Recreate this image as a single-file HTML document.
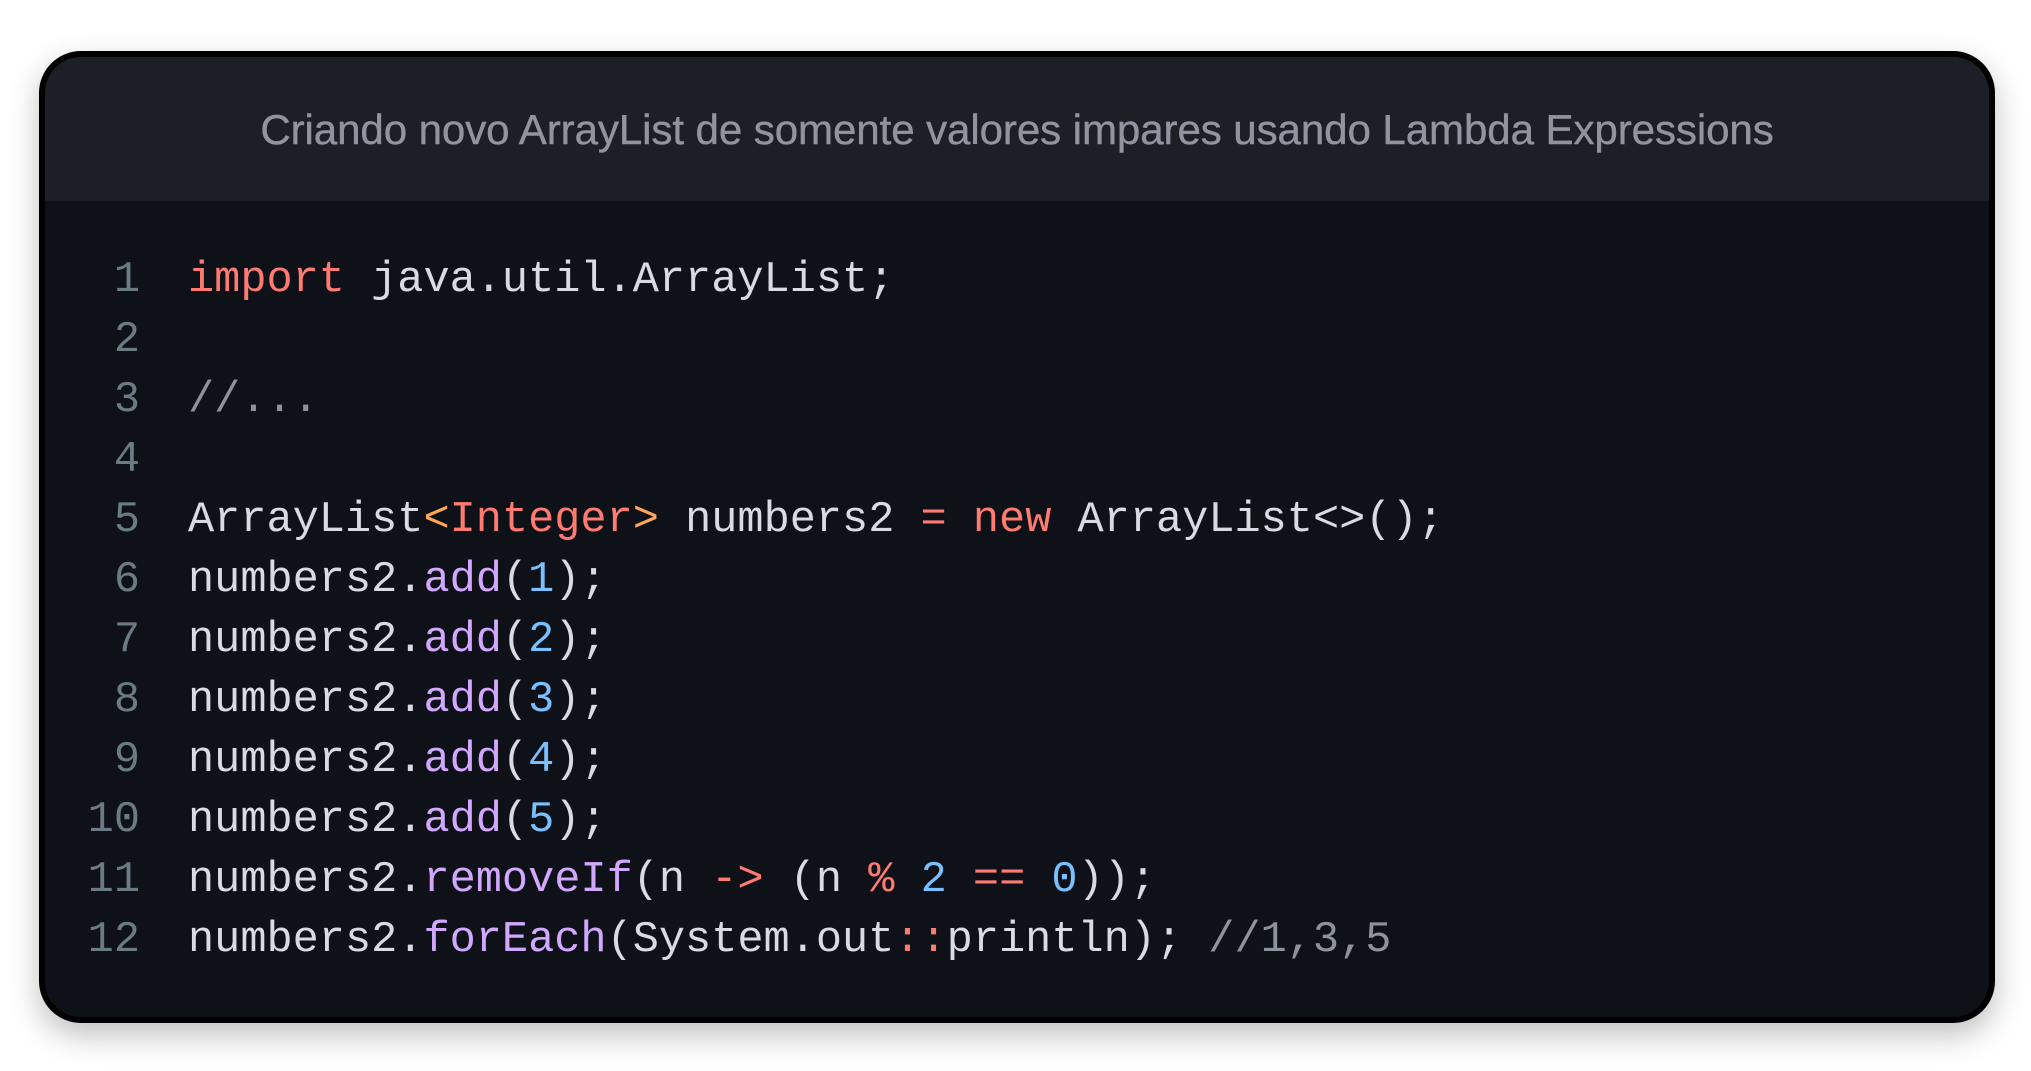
<!DOCTYPE html>
<html><head><meta charset="utf-8"><style>
html,body{margin:0;padding:0;background:#fff;width:2031px;height:1071px;overflow:hidden}
.card{position:absolute;left:39px;top:51px;width:1956px;height:972px;box-sizing:border-box;border:6px solid #000;border-radius:42px;background:#0e1117;overflow:hidden;box-shadow:0 12px 30px rgba(0,0,0,0.25)}
.hdr{position:absolute;left:0;top:0;right:0;height:144px;background:#1c1f26;color:#8f949f;font-family:"Liberation Sans",sans-serif;font-size:42.1px;text-align:center;line-height:146px;letter-spacing:-0.1px;-webkit-text-stroke:0.4px #8f949f}
.code{position:absolute;left:0;top:194px;font-family:"Liberation Mono",monospace;font-size:43.6px;line-height:60px;color:#d6dce2;white-space:pre}
.ln{position:absolute;left:0;width:95px;text-align:right;color:#6b7b84}
.tx{position:absolute;left:143px}
.k{color:#ff7b72}.o{color:#ffa657}.p{color:#d2a8ff}.b{color:#79c0ff}.c{color:#8b949e}
</style></head><body>
<div class="card">
<div class="hdr">Criando novo ArrayList de somente valores impares usando Lambda Expressions</div>
<div class="code">
<div class="ln" style="top:0">1</div><div class="tx" style="top:0"><span class="k">import</span> java.util.ArrayList;</div>
<div class="ln" style="top:60px">2</div>
<div class="ln" style="top:120px">3</div><div class="tx c" style="top:120px">//...</div>
<div class="ln" style="top:180px">4</div>
<div class="ln" style="top:240px">5</div><div class="tx" style="top:240px">ArrayList<span class="o">&lt;</span><span class="k">Integer</span><span class="o">&gt;</span> numbers2 <span class="k">=</span> <span class="k">new</span> ArrayList&lt;&gt;();</div>
<div class="ln" style="top:300px">6</div><div class="tx" style="top:300px">numbers2.<span class="p">add</span>(<span class="b">1</span>);</div>
<div class="ln" style="top:360px">7</div><div class="tx" style="top:360px">numbers2.<span class="p">add</span>(<span class="b">2</span>);</div>
<div class="ln" style="top:420px">8</div><div class="tx" style="top:420px">numbers2.<span class="p">add</span>(<span class="b">3</span>);</div>
<div class="ln" style="top:480px">9</div><div class="tx" style="top:480px">numbers2.<span class="p">add</span>(<span class="b">4</span>);</div>
<div class="ln" style="top:540px">10</div><div class="tx" style="top:540px">numbers2.<span class="p">add</span>(<span class="b">5</span>);</div>
<div class="ln" style="top:600px">11</div><div class="tx" style="top:600px">numbers2.<span class="p">removeIf</span>(n <span class="k">-&gt;</span> (n <span class="k">%</span> <span class="b">2</span> <span class="k">==</span> <span class="b">0</span>));</div>
<div class="ln" style="top:660px">12</div><div class="tx" style="top:660px">numbers2.<span class="p">forEach</span>(System.out<span class="k">::</span>println); <span class="c">//1,3,5</span></div>
</div>
</div>
</body></html>
